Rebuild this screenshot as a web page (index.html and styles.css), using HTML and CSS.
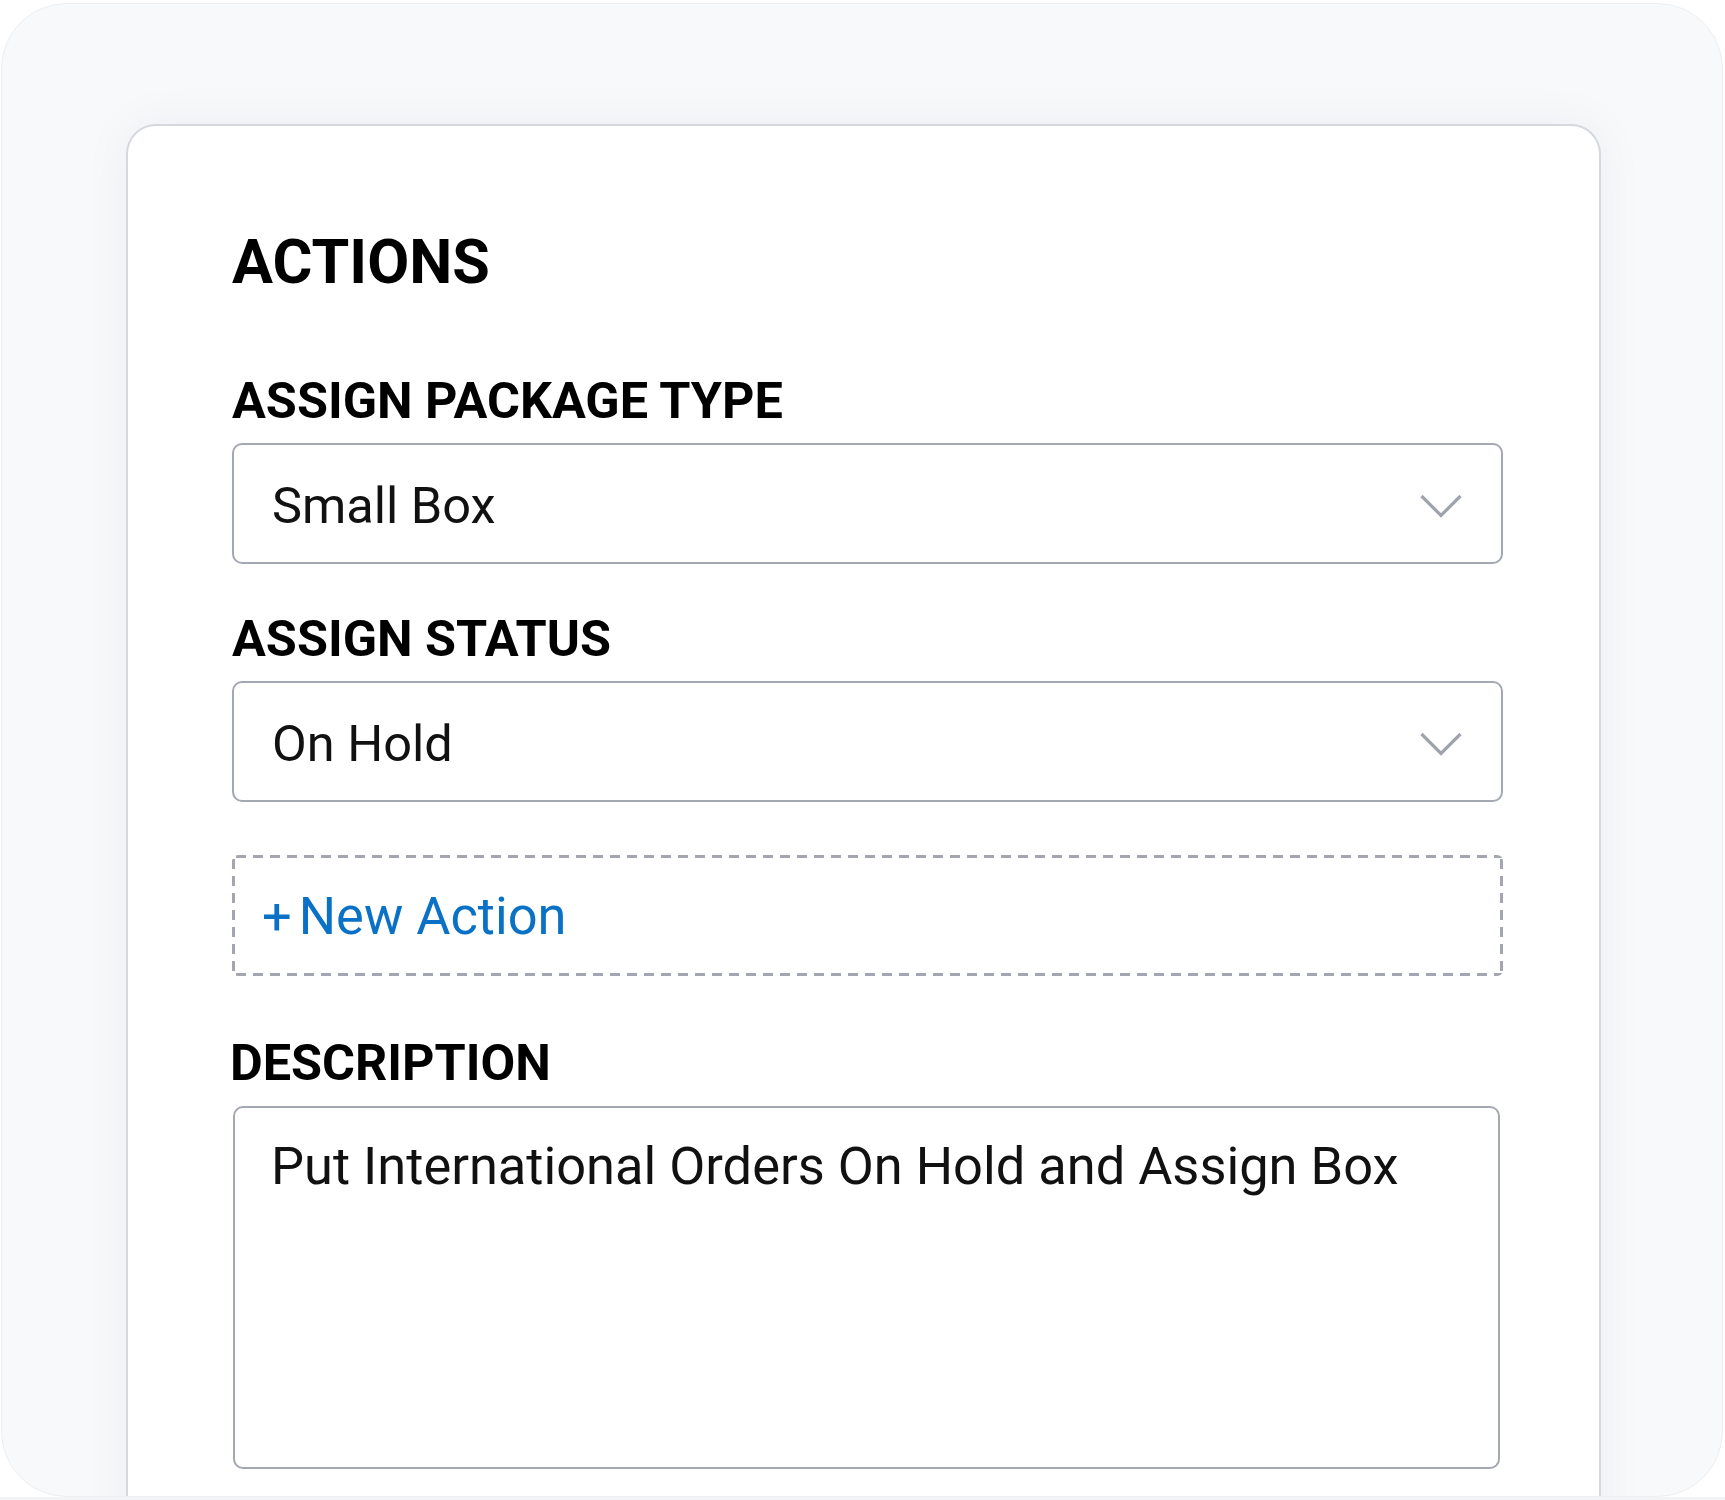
FILE: index.html
```html
<!DOCTYPE html>
<html lang="en">
<head>
<meta charset="utf-8">
<title>Actions</title>
<link rel="stylesheet" href="styles.css">
</head>
<body>
<div class="frame">
  <section class="card">
    <h1 class="title">ACTIONS</h1>

    <label class="label label-package">ASSIGN PACKAGE TYPE</label>
    <div class="select">
      <span class="value">Small Box</span>
      <svg class="chevron" width="42" height="24" viewBox="0 0 42 24" aria-hidden="true">
        <polyline points="1.5,2 21,21.5 40.5,2" fill="none" stroke="#9fa3ab" stroke-width="3.2"/>
      </svg>
    </div>

    <label class="label label-status">ASSIGN STATUS</label>
    <div class="select">
      <span class="value">On Hold</span>
      <svg class="chevron" width="42" height="24" viewBox="0 0 42 24" aria-hidden="true">
        <polyline points="1.5,2 21,21.5 40.5,2" fill="none" stroke="#9fa3ab" stroke-width="3.2"/>
      </svg>
    </div>

    <div class="new-action"><span class="plus">+</span>New Action</div>

    <label class="label label-desc">DESCRIPTION</label>
    <div class="textarea">Put International Orders On Hold and Assign Box</div>
  </section>
</div>
<div class="strip"></div>
</body>
</html>
```

FILE: styles.css
```css
html, body {
  margin: 0;
  padding: 0;
  background: #ffffff;
}

body {
  font-family: Roboto, "Noto Sans", "Liberation Sans", sans-serif;
  color: #000;
}

.frame {
  box-sizing: border-box;
  width: 1722px;
  height: 1494px;
  margin: 3px 0 0 1px;
  border: 1px solid #eceef1;
  border-radius: 66px;
  background: #f8f9fb;
  overflow: hidden;
}

.card {
  box-sizing: border-box;
  width: 1475px;
  margin: 120px 0 0 124px;
  padding: 106px 96px 140px 104px;
  background: #ffffff;
  border: 2px solid #d5d8dd;
  border-radius: 30px;
  box-shadow: 0 0 50px rgba(30, 40, 60, 0.05);
  display: flex;
  flex-direction: column;
}

.title {
  margin: 0;
  font-size: 61px;
  line-height: 61px;
  font-weight: 700;
  color: #000;
}

.label {
  display: block;
  font-size: 50.4px;
  line-height: 50px;
  font-weight: 700;
  color: #000;
}

.label-package { margin-top: 83px; }
.label-status { margin-top: 50px; }
.label-desc { margin-top: 62px; margin-left: -2px; }

.select {
  box-sizing: border-box;
  height: 121px;
  margin-top: 17px;
  border: 2px solid #a4a8b0;
  border-radius: 10px;
  display: flex;
  align-items: center;
  justify-content: space-between;
  padding: 5px 39px 0 38px;
}

.value {
  font-size: 50.5px;
  line-height: 52px;
  color: #111;
}

.chevron {
  display: block;
  flex: none;
}

.new-action {
  box-sizing: border-box;
  height: 121px;
  margin-top: 53px;
  border-radius: 6px;
  display: flex;
  align-items: center;
  padding-left: 30px;
  font-size: 52.4px;
  line-height: 52px;
  color: #0a72c6;
  background-image:
    linear-gradient(90deg, #a3a6ae 10px, transparent 10px),
    linear-gradient(90deg, #a3a6ae 10px, transparent 10px),
    linear-gradient(180deg, #a3a6ae 10px, transparent 10px),
    linear-gradient(180deg, #a3a6ae 10px, transparent 10px);
  background-size: 17px 3px, 17px 3px, 3px 17px, 3px 17px;
  background-repeat: repeat-x, repeat-x, repeat-y, repeat-y;
  background-position: 4px 0, 4px 100%, 0 4px, 100% 4px;
}

.plus {
  margin-right: 7px;
}

.textarea {
  box-sizing: border-box;
  height: 363px;
  margin: 18px 3px 0 1px;
  border: 2px solid #a4a8b0;
  border-radius: 10px;
  padding: 28px 36px;
  font-size: 52.4px;
  line-height: 61px;
  color: #111;
}

.strip {
  height: 3px;
  background: #f3f4f6;
}
```
